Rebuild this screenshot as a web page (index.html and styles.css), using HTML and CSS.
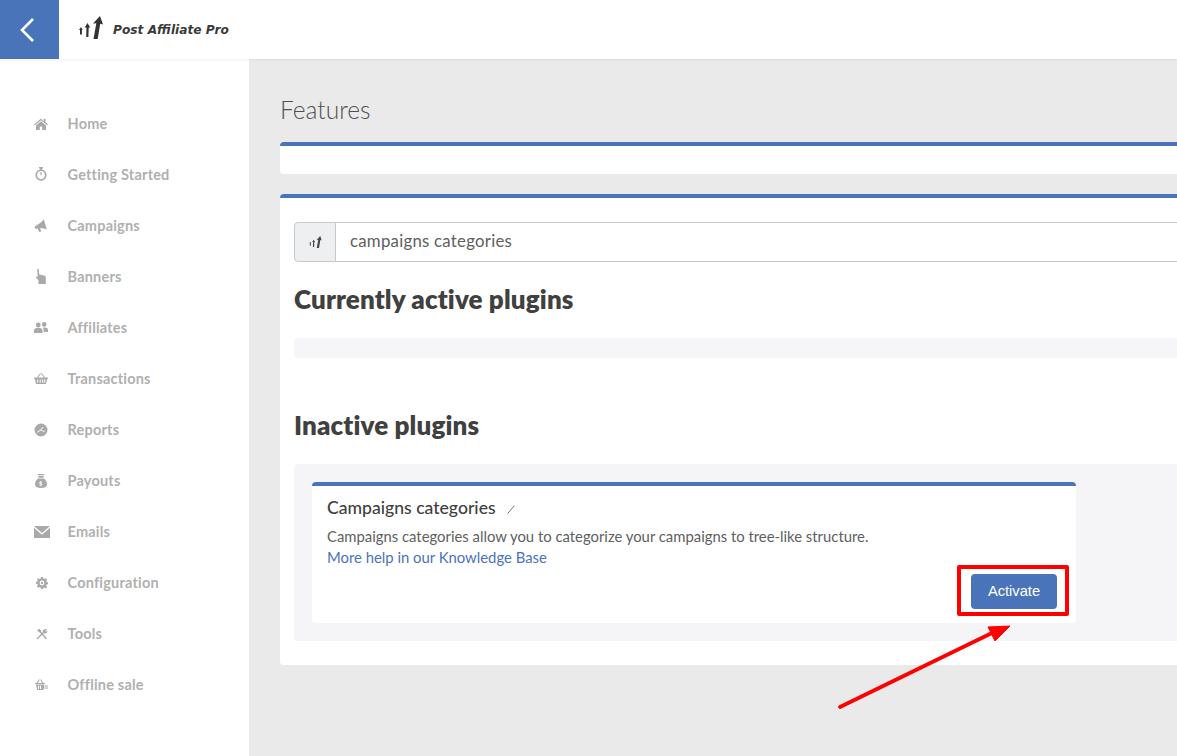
FILE: index.html
```html
<!DOCTYPE html>
<html lang="en">
<head>
<meta charset="utf-8">
<title>Features</title>
<link rel="stylesheet" href="styles.css">
</head>
<body>
<svg class="defs" width="0" height="0" aria-hidden="true">
  <symbol id="logo" viewBox="0 0 24 23">
    <path d="M0 14 2 11 3.700 14H2.900V18.500H1V14Z M5.600 11.500 8.500 7 11.200 11.500H9.700L9.400 21H7.200L7.400 11.500Z M14 7.500 21 0 24 8.500 21.200 7.700 18.700 23H14.500L17.300 7.200Z"/>
  </symbol>
</svg>
<header class="topbar">
  <a class="back" href="#" aria-label="Back">
    <svg width="18" height="26" viewBox="0 0 18 26"><path d="M15 2 4 13 15 24" fill="none" stroke="#fff" stroke-width="2.600"/></svg>
  </a>
  <div class="brand">
    <svg class="brand-mark" width="24" height="23" viewBox="0 0 24 23"><use href="#logo" width="24" height="23"/></svg>
    <span class="brand-name">Post Affiliate Pro</span>
  </div>
</header>
<div class="shell">
  <nav class="sidebar">
    <a class="nav-item" href="#"><span class="nav-icon"><svg width="14" height="12" viewBox="0 0 14 12"><path d="M7 .5 0 6.400l.8.9L7 2.200l6.200 5.100.8-.9-2.500-2.100V1h-1.900v2.500ZM2 7.400V12h3.800V8.500h2.400V12H12V7.400L7 3.300Z"/></svg></span>Home</a>
    <a class="nav-item" href="#"><span class="nav-icon"><svg width="14" height="15" viewBox="0 0 14 15"><path d="M5 0h4v1.500H8v1.100A5.600 5.600 0 1 1 6 2.600V1.500H5Zm2 4.100a3.900 3.900 0 1 0 0 7.800 3.900 3.900 0 0 0 0-7.800Zm-.6 1h1.200v3.200H6.400Z" fill-rule="evenodd"/></svg></span>Getting Started</a>
    <a class="nav-item" href="#"><span class="nav-icon"><svg width="14" height="13" viewBox="0 0 14 13"><path d="M.2 8 7.500 3 9.800.2l3 10.300-3.500-1.300L6 9.300l1.300 3.200-2.200.5L3.800 9.500 2 9.900Z"/></svg></span>Campaigns</a>
    <a class="nav-item" href="#"><span class="nav-icon"><svg width="14" height="15" viewBox="0 0 14 15"><path d="M3.200 0h1.500l.6 5.500 5.500 1.300c.7.200 1 .7 1 1.300V15H4.500V11.500L1.800 8.300l.5-1 1.400.7Z"/></svg></span>Banners</a>
    <a class="nav-item" href="#"><span class="nav-icon"><svg width="14" height="11" viewBox="0 0 14 11"><circle cx="4.300" cy="3" r="2.400"/><circle cx="10.200" cy="2.400" r="2.300"/><path d="M0 11V8.200C0 6.600 1.800 5.700 4.300 5.700s4.300.9 4.300 2.500V11Zm9.600-5.500c2.300-.3 4.400.5 4.400 2.300V10H9.700V8c0-1-.4-1.800-1-2.300Z"/></svg></span>Affiliates</a>
    <a class="nav-item" href="#"><span class="nav-icon"><svg width="14" height="11" viewBox="0 0 14 11"><path d="M0 4.600h14v1.100h-.8L12 11H2L.8 5.700H0ZM3.200 6.500v3.300h1V6.500Zm2.500 0v3.300h1V6.500Zm2.500 0v3.300h1V6.500Zm2 0v3.300h1V6.500ZM3 4.200 6.200.2l.8.6-2.700 3.400Zm8 0L7.800.2 7 .8l2.700 3.400Z" fill-rule="evenodd"/></svg></span>Transactions</a>
    <a class="nav-item" href="#"><span class="nav-icon"><svg width="14" height="14" viewBox="0 0 14 14"><path d="M7 .5a6.500 6.500 0 1 0 0 13 6.500 6.500 0 0 0 0-13Zm-.4 7.100L3.300 9.800l-.5-.7 3.500-2.300 2.600-3 .7.500-2.500 2.700 3.600 1.100-.3.800Z" fill-rule="evenodd"/></svg></span>Reports</a>
    <a class="nav-item" href="#"><span class="nav-icon"><svg width="14" height="14" viewBox="0 0 14 14"><path d="M3.800 0h6.400v1.300H3.800Zm.6 2h5.200v1.800H4.400Zm-.2 2.500h5.600c2 1.300 3.200 3.400 3.200 5.700 0 2.600-2 3.800-6 3.800s-6-1.200-6-3.800c0-2.300 1.200-4.400 3.200-5.700ZM6.300 7v.8c-1.500.4-1.400 2.200.3 2.400.8.100 1 .7.200.7-.4 0-.8-.2-1.100-.4l-.4.700c.3.200.7.400 1 .4v.7h.9v-.8c1.500-.4 1.400-2.200-.2-2.400-.9-.1-1-.6-.2-.6.3 0 .6.100.9.300l.4-.7c-.3-.2-.6-.3-.9-.3V7Z" fill-rule="evenodd"/></svg></span>Payouts</a>
    <a class="nav-item" href="#"><span class="nav-icon"><svg width="16" height="12" viewBox="0 0 16 12"><path d="M0 0h16L8 7Zm0 1.800L8 8.800l8-7V12H0Z"/></svg></span>Emails</a>
    <a class="nav-item" href="#"><span class="nav-icon nav-icon-small"><svg width="12" height="12" viewBox="0 0 12 12"><path d="M5 0h2l.3 1.600 1.100.5L9.800 1.200l1.300 1.400-.9 1.300.4 1.100 1.400.3v2l-1.400.3-.4 1.100.9 1.300-1.300 1.400-1.400-.9-1.100.5L7 12H5l-.3-1.600-1.100-.5-1.400.9L.9 9.400l.9-1.300-.4-1.100L0 6.700v-2l1.400-.3.4-1.100-.9-1.300L2.200 1.200l1.400.9 1.100-.5ZM6 3.600a2.400 2.400 0 1 0 0 4.800 2.400 2.400 0 0 0 0-4.800Zm0 1.200a1.200 1.200 0 1 1 0 2.400 1.200 1.200 0 0 1 0-2.400Z" fill-rule="evenodd"/></svg></span>Configuration</a>
    <a class="nav-item" href="#"><span class="nav-icon nav-icon-small"><svg width="12" height="12" viewBox="0 0 12 12"><path d="M1 11 7.500 4.500M3.500 3 10.500 11" fill="none" stroke="#a9a9a9" stroke-width="1.400"/><path d="M1 2.500 3 .8 5.500 2.800 3.800 4.600ZM6.500 3.500C7 1.500 9 .5 11 1.200L9.300 3l.8.8L11.500 2.500c.3 2-1.500 3.500-3.500 3Z"/></svg></span>Tools</a>
    <a class="nav-item" href="#"><span class="nav-icon"><svg width="14" height="11" viewBox="0 0 14 11"><path d="M2.500 4 5 .3l.8.5L4 4h4L6.300.8 7 .3 9.500 4H11v1H1v-1ZM1.800 5.500h8.500L9.600 11H3.200ZM4 6.500v3.500h1V6.500Zm2 0v3.500h1V6.500ZM10.500 6.500H14v1h-3.500ZM10.200 8.500H14v1h-3.800Z" fill-rule="evenodd"/></svg></span>Offline sale</a>
  </nav>
  <main class="content">
    <h1 class="page-title">Features</h1>
    <section class="panel panel-empty"></section>
    <section class="panel panel-main">
      <div class="search">
        <span class="search-addon"><svg width="13" height="12" viewBox="0 0 24 23"><use href="#logo" width="24" height="23"/></svg></span>
        <input class="search-input" type="text" value="campaigns categories" aria-label="Search">
      </div>
      <h2 class="section-title">Currently active plugins</h2>
      <div class="plugin-strip"></div>
      <h2 class="section-title section-inactive">Inactive plugins</h2>
      <div class="plugin-area">
        <article class="plugin-card">
          <h3 class="plugin-name">Campaigns categories<svg class="plugin-mark" width="8" height="9" viewBox="0 0 8 9" aria-hidden="true"><path d="M.7 8.500 7.300.7" fill="none" stroke="#777" stroke-width="1"/></svg></h3>
          <p class="plugin-text">Campaigns categories allow you to categorize your campaigns to tree-like structure.<br><a class="plugin-link" href="#">More help in our Knowledge Base</a></p>
          <div class="plugin-actions"><button class="btn" type="button">Activate</button></div>
        </article>
      </div>
    </section>
  </main>
</div>
<div class="callout-box"></div>
<svg class="callout-arrow" width="190" height="100" viewBox="0 0 190 100" aria-hidden="true">
  <path d="M10 94 166 18" fill="none" stroke="#f00" stroke-width="3.800" stroke-linecap="round"/>
  <path d="M180 13 158 14 165 28Z" fill="#f00" stroke="#f00" stroke-width="1" stroke-linejoin="round"/>
</svg>
</body>
</html>
```
FILE: styles.css
```css
* { box-sizing: border-box; }
html, body { margin: 0; height: 100%; }
body {
  position: relative;
  height: 756px;
  overflow: hidden;
  font-family: Lato, "Open Sans", sans-serif;
  color: #404040;
  background: #eaeaea;
}
.defs { position: absolute; }
.topbar {
  position: relative;
  z-index: 2;
  display: flex;
  align-items: center;
  height: 59px;
  background: #fff;
  box-shadow: 0 1px 3px rgba(0, 0, 0, .06);
}
.back {
  display: flex;
  align-items: center;
  justify-content: center;
  width: 59px;
  height: 59px;
  background: #4a74b9;
  padding-right: 5px;
}
.brand { display: flex; align-items: center; margin-left: 20px; }
.brand-mark { fill: #333; margin-top: -4px; }
.brand-name {
  margin-left: 10px;
  font: italic 700 12.200px "DejaVu Sans", sans-serif;
  color: #3a3a3a;
}
.shell { display: flex; height: 697px; }
.sidebar {
  flex: none;
  width: 249px;
  padding-top: 39px;
  background: #fff;
}
.nav-item {
  display: flex;
  align-items: center;
  height: 51px;
  padding-left: 34px;
  font-size: 14.500px;
  font-weight: 700;
  letter-spacing: .2px;
  color: #b0b0b0;
  text-decoration: none;
}
.nav-icon {
  display: flex;
  align-items: center;
  width: 33.500px;
  fill: #a9a9a9;
}
.nav-icon-small { padding-left: 2px; }
.content { flex: 1; min-width: 0; padding: 0 0 0 31px; overflow: hidden; }
.page-title {
  margin: 37px 0 19px;
  font-size: 24.500px;
  line-height: 27px;
  font-weight: 300;
  color: #505050;
}
.panel {
  margin-right: -20px;
  background: #fff;
  border-top: 4px solid #4a74b9;
  border-radius: 4px;
}
.panel-empty { height: 32px; margin-bottom: 20px; }
.panel-main { height: 471px; padding: 24px 0 0 14px; }
.search { display: flex; height: 40px; }
.search-addon {
  display: flex;
  align-items: center;
  justify-content: center;
  flex: none;
  width: 42px;
  background: #eeeff1;
  border: 1px solid #c9c9c9;
  border-radius: 4px 0 0 4px;
  fill: #444;
}
.search-input {
  flex: 1;
  min-width: 0;
  padding: 0 14px 3px;
  border: 1px solid #c9c9c9;
  border-left: 0;
  font: 400 16.800px Lato, sans-serif;
  letter-spacing: .25px;
  color: #606060;
  background: #fff;
}
.section-title {
  margin: 23px 0 25px;
  font-size: 26px;
  line-height: 28px;
  font-weight: 800;
  letter-spacing: .13px;
  color: #404040;
}
.plugin-strip { height: 20px; background: #f6f6f8; border-radius: 3px; }
.section-inactive { margin: 53px 0 25px; }
.plugin-area {
  height: 177px;
  padding: 18px 0 0 18px;
  background: #f5f5f8;
  border-radius: 4px;
}
.plugin-card {
  width: 764px;
  height: 141px;
  padding: 12px 15px 0;
  background: #fff;
  border-top: 4px solid #4a74b9;
  border-radius: 4px;
}
.plugin-name { height: 20px; margin: 0 0 8px; font-size: 17.600px; line-height: 20px; font-weight: 500; color: #404040; }
.plugin-mark { margin-left: 11px; }
.plugin-text { margin: 0; font-size: 14.850px; line-height: 21px; font-weight: 400; color: #606060; }
.plugin-link { color: #4a74b9; text-decoration: none; }
.plugin-actions { display: flex; justify-content: flex-end; margin-top: 6px; padding-right: 4px; }
.btn {
  width: 86px;
  height: 35px;
  padding: 0 0 2px;
  background: #4a74b9;
  border: 0;
  border-radius: 4px;
  color: #fff;
  font: 400 14.700px "Liberation Sans", sans-serif;
}
.callout-box {
  position: absolute;
  left: 957px;
  top: 565px;
  width: 112px;
  height: 51px;
  border: 4px solid #f00;
  border-radius: 2px;
}
.callout-arrow { position: absolute; left: 830px; top: 613px; }
```
